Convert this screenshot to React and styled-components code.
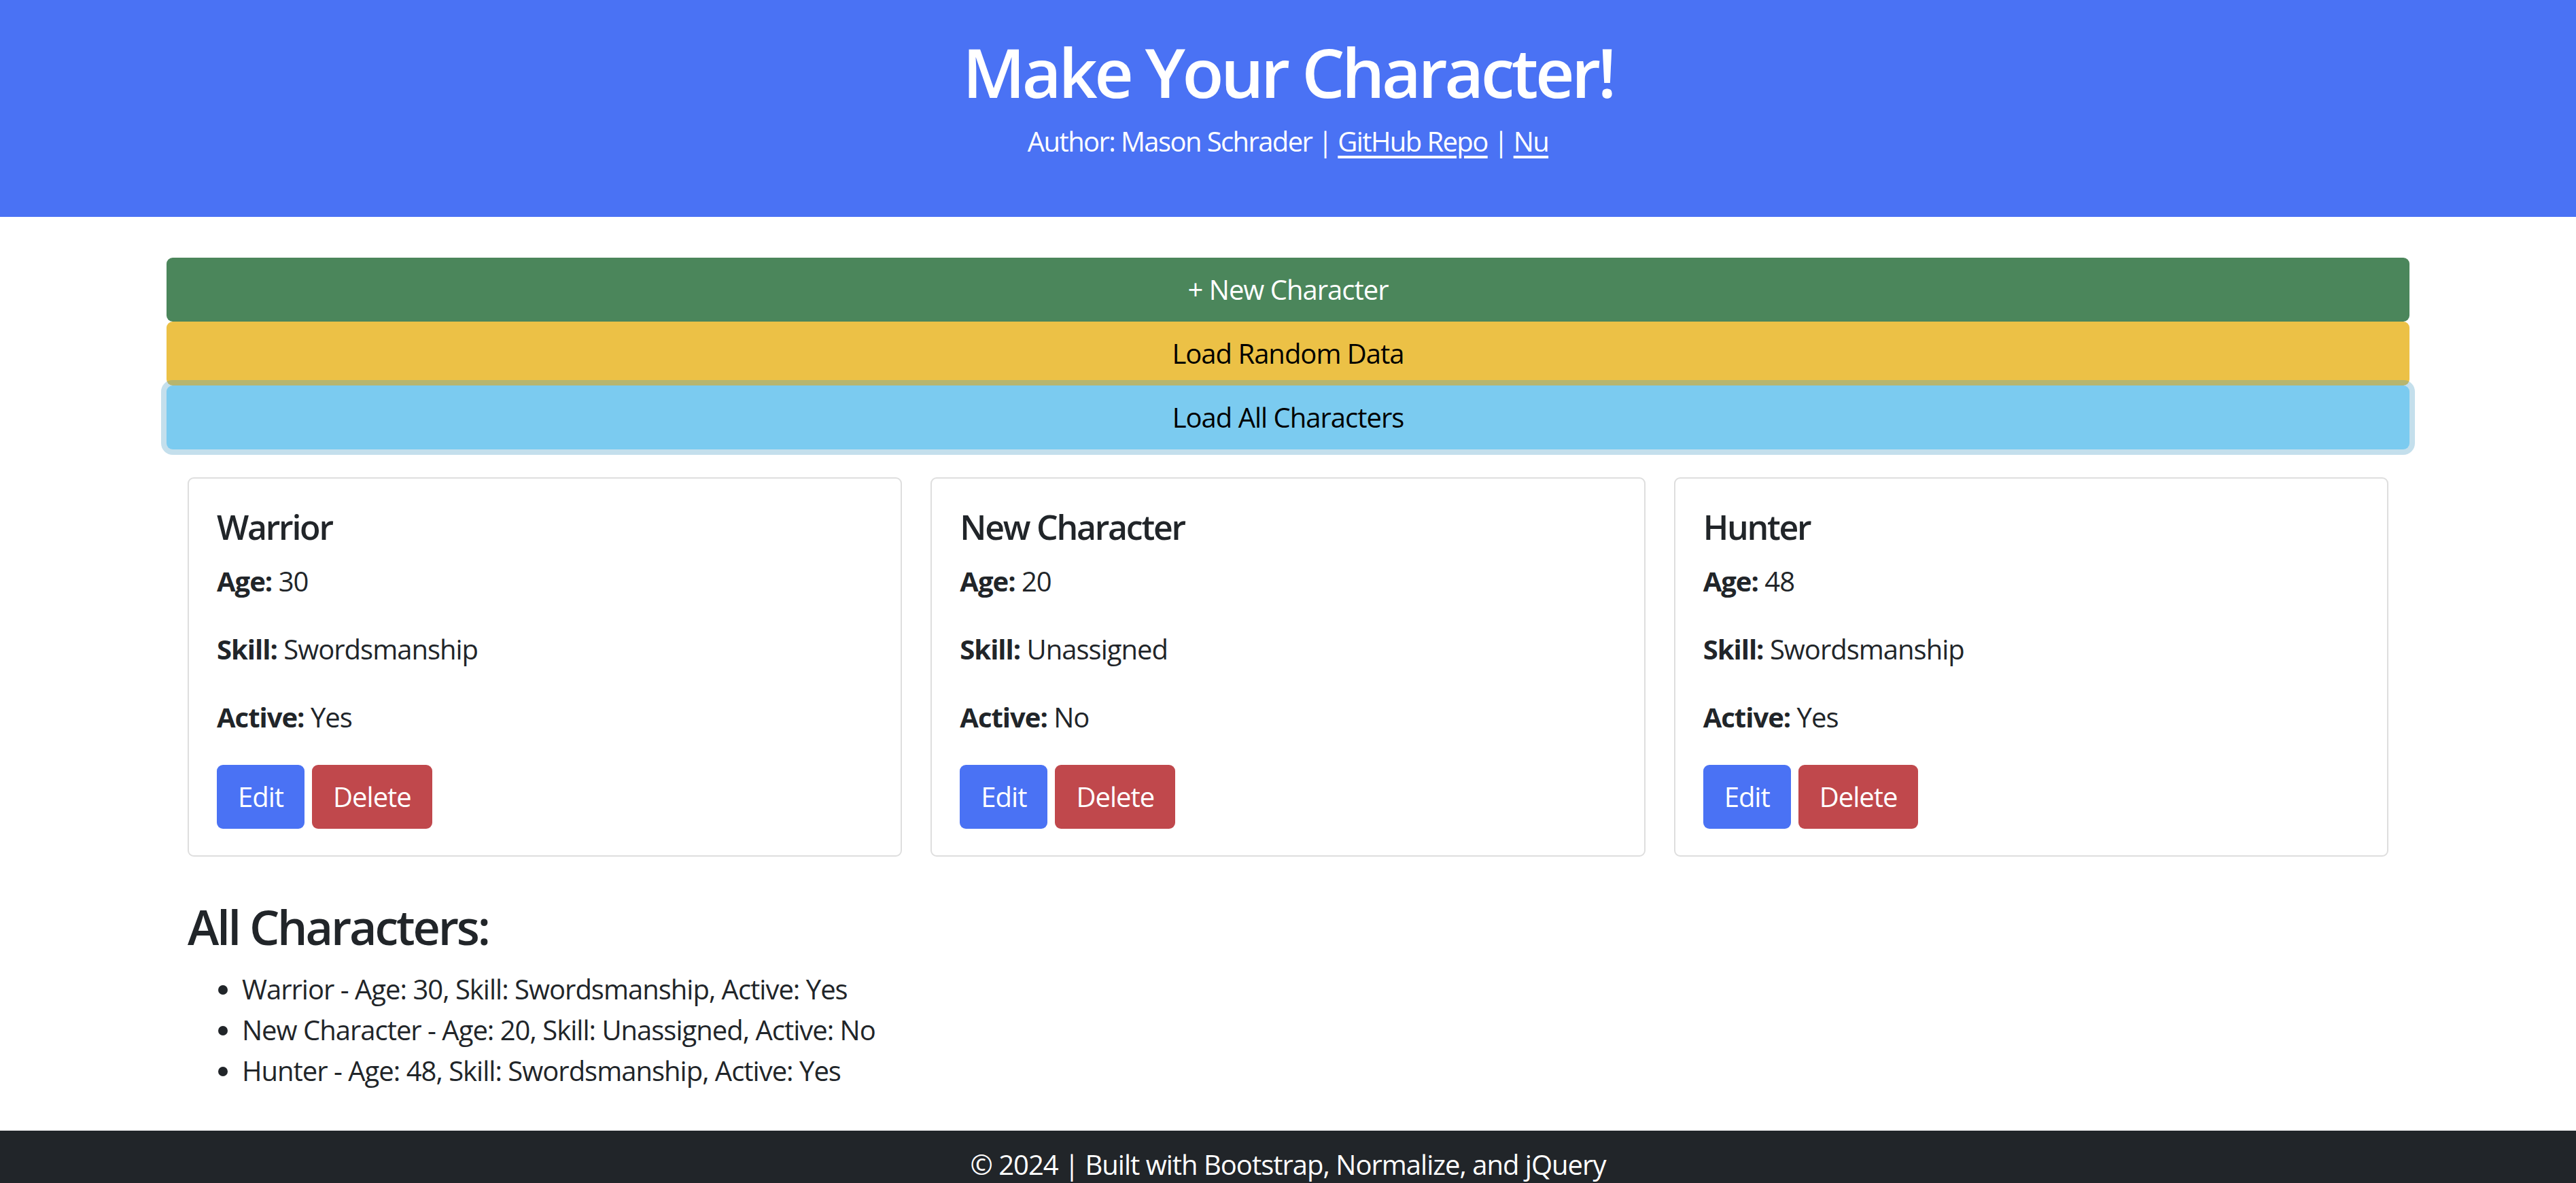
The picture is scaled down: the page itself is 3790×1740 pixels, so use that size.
import React from "react";
import styled, { createGlobalStyle } from "styled-components";

const characters = [
  { name: "Warrior", age: 30, skill: "Swordsmanship", active: true },
  { name: "New Character", age: 20, skill: "Unassigned", active: false },
  { name: "Hunter", age: 48, skill: "Swordsmanship", active: true },
];

const tones = {
  success: { bg: "#4b865b", fg: "#ffffff" },
  warning: { bg: "#ecc146", fg: "#000000" },
  info: { bg: "#7bcbf0", fg: "#000000" },
  primary: { bg: "#4a72f4", fg: "#ffffff" },
  danger: { bg: "#c0484c", fg: "#ffffff" },
};

const GlobalStyle = createGlobalStyle`
  body {
    margin: 0;
    font-family: "Open Sans", "Noto Sans", sans-serif;
    font-size: 40px;
    line-height: 1.5;
    letter-spacing: -0.025em;
    color: #212529;
    background: #ffffff;
  }
`;

const Header = styled.header`
  background: #4a72f4;
  color: #ffffff;
  text-align: center;
  padding: 45px 0 81px;
`;

const Title = styled.h1`
  margin: 0 0 13px;
  font-size: 100px;
  line-height: 120px;
  font-weight: 600;
  letter-spacing: -0.045em;
`;

const Byline = styled.p`
  margin: 0;
  line-height: 60px;
  letter-spacing: -0.04em;
`;

const Link = styled.a`
  color: #ffffff;
  text-decoration: underline;
  text-underline-offset: 6px;
`;

const Main = styled.main`
  width: 3300px;
  margin: 0 auto;
  padding-top: 60px;
`;

const ActionStack = styled.div`
  display: flex;
  flex-direction: column;
`;

const ActionButton = styled.button`
  height: 94px;
  width: 100%;
  border: none;
  border-radius: 9px;
  font: inherit;
  letter-spacing: inherit;
  background: ${(p) => tones[p.$tone].bg};
  color: ${(p) => tones[p.$tone].fg};
  box-shadow: ${(p) =>
    p.$focused ? "0 0 0 8px rgba(72, 157, 195, 0.32)" : "none"};
  cursor: pointer;
`;

const CardGrid = styled.div`
  display: grid;
  grid-template-columns: repeat(3, 1fr);
  gap: 42px;
  margin: 41px 31px 0;
`;

const Card = styled.div`
  border: 2px solid #dedede;
  border-radius: 9px;
  padding: 41px 41px 39px;
`;

const CardTitle = styled.h5`
  margin: 0 0 20px;
  font-size: 50px;
  line-height: 60px;
  font-weight: 600;
  letter-spacing: -0.045em;
`;

const Field = styled.p`
  margin: 0 0 40px;
  line-height: 60px;
`;

const Label = styled.strong`
  font-weight: 700;
`;

const CardActions = styled.div`
  display: flex;
  gap: 11px;
`;

const SmallButton = styled.button`
  height: 94px;
  padding: 0 31px;
  border: none;
  border-radius: 9px;
  font: inherit;
  letter-spacing: inherit;
  background: ${(p) => tones[p.$variant].bg};
  color: ${(p) => tones[p.$variant].fg};
  cursor: pointer;
`;

const Section = styled.section`
  margin: 61px 31px 0;
`;

const SectionHeading = styled.h3`
  margin: 0 0 20px;
  font-size: 70px;
  line-height: 84px;
  font-weight: 600;
  letter-spacing: -0.045em;
`;

const CharacterList = styled.ul`
  margin: 0 0 58px;
  padding-left: 80px;
  line-height: 60px;
`;

const Footer = styled.footer`
  background: #212529;
  color: #ffffff;
  text-align: center;
  padding: 20px 0;
  line-height: 60px;
`;

const yesNo = (v) => (v ? "Yes" : "No");

export default function App() {
  return (
    <>
      <GlobalStyle />
      <Header>
        <Title>Make Your Character!</Title>
        <Byline>
          Author: Mason Schrader | <Link href="#">GitHub Repo</Link> |{" "}
          <Link href="#">Nu</Link>
        </Byline>
      </Header>
      <Main>
        <ActionStack>
          <ActionButton $tone="success">+ New Character</ActionButton>
          <ActionButton $tone="warning">Load Random Data</ActionButton>
          <ActionButton $tone="info" $focused>
            Load All Characters
          </ActionButton>
        </ActionStack>
        <CardGrid>
          {characters.map((c) => (
            <Card key={c.name}>
              <CardTitle>{c.name}</CardTitle>
              <Field>
                <Label>Age:</Label> {c.age}
              </Field>
              <Field>
                <Label>Skill:</Label> {c.skill}
              </Field>
              <Field>
                <Label>Active:</Label> {yesNo(c.active)}
              </Field>
              <CardActions>
                <SmallButton $variant="primary">Edit</SmallButton>
                <SmallButton $variant="danger">Delete</SmallButton>
              </CardActions>
            </Card>
          ))}
        </CardGrid>
        <Section>
          <SectionHeading>All Characters:</SectionHeading>
          <CharacterList>
            {characters.map((c) => (
              <li key={c.name}>
                {c.name} - Age: {c.age}, Skill: {c.skill}, Active:{" "}
                {yesNo(c.active)}
              </li>
            ))}
          </CharacterList>
        </Section>
      </Main>
      <Footer>© 2024 | Built with Bootstrap, Normalize, and jQuery</Footer>
    </>
  );
}
